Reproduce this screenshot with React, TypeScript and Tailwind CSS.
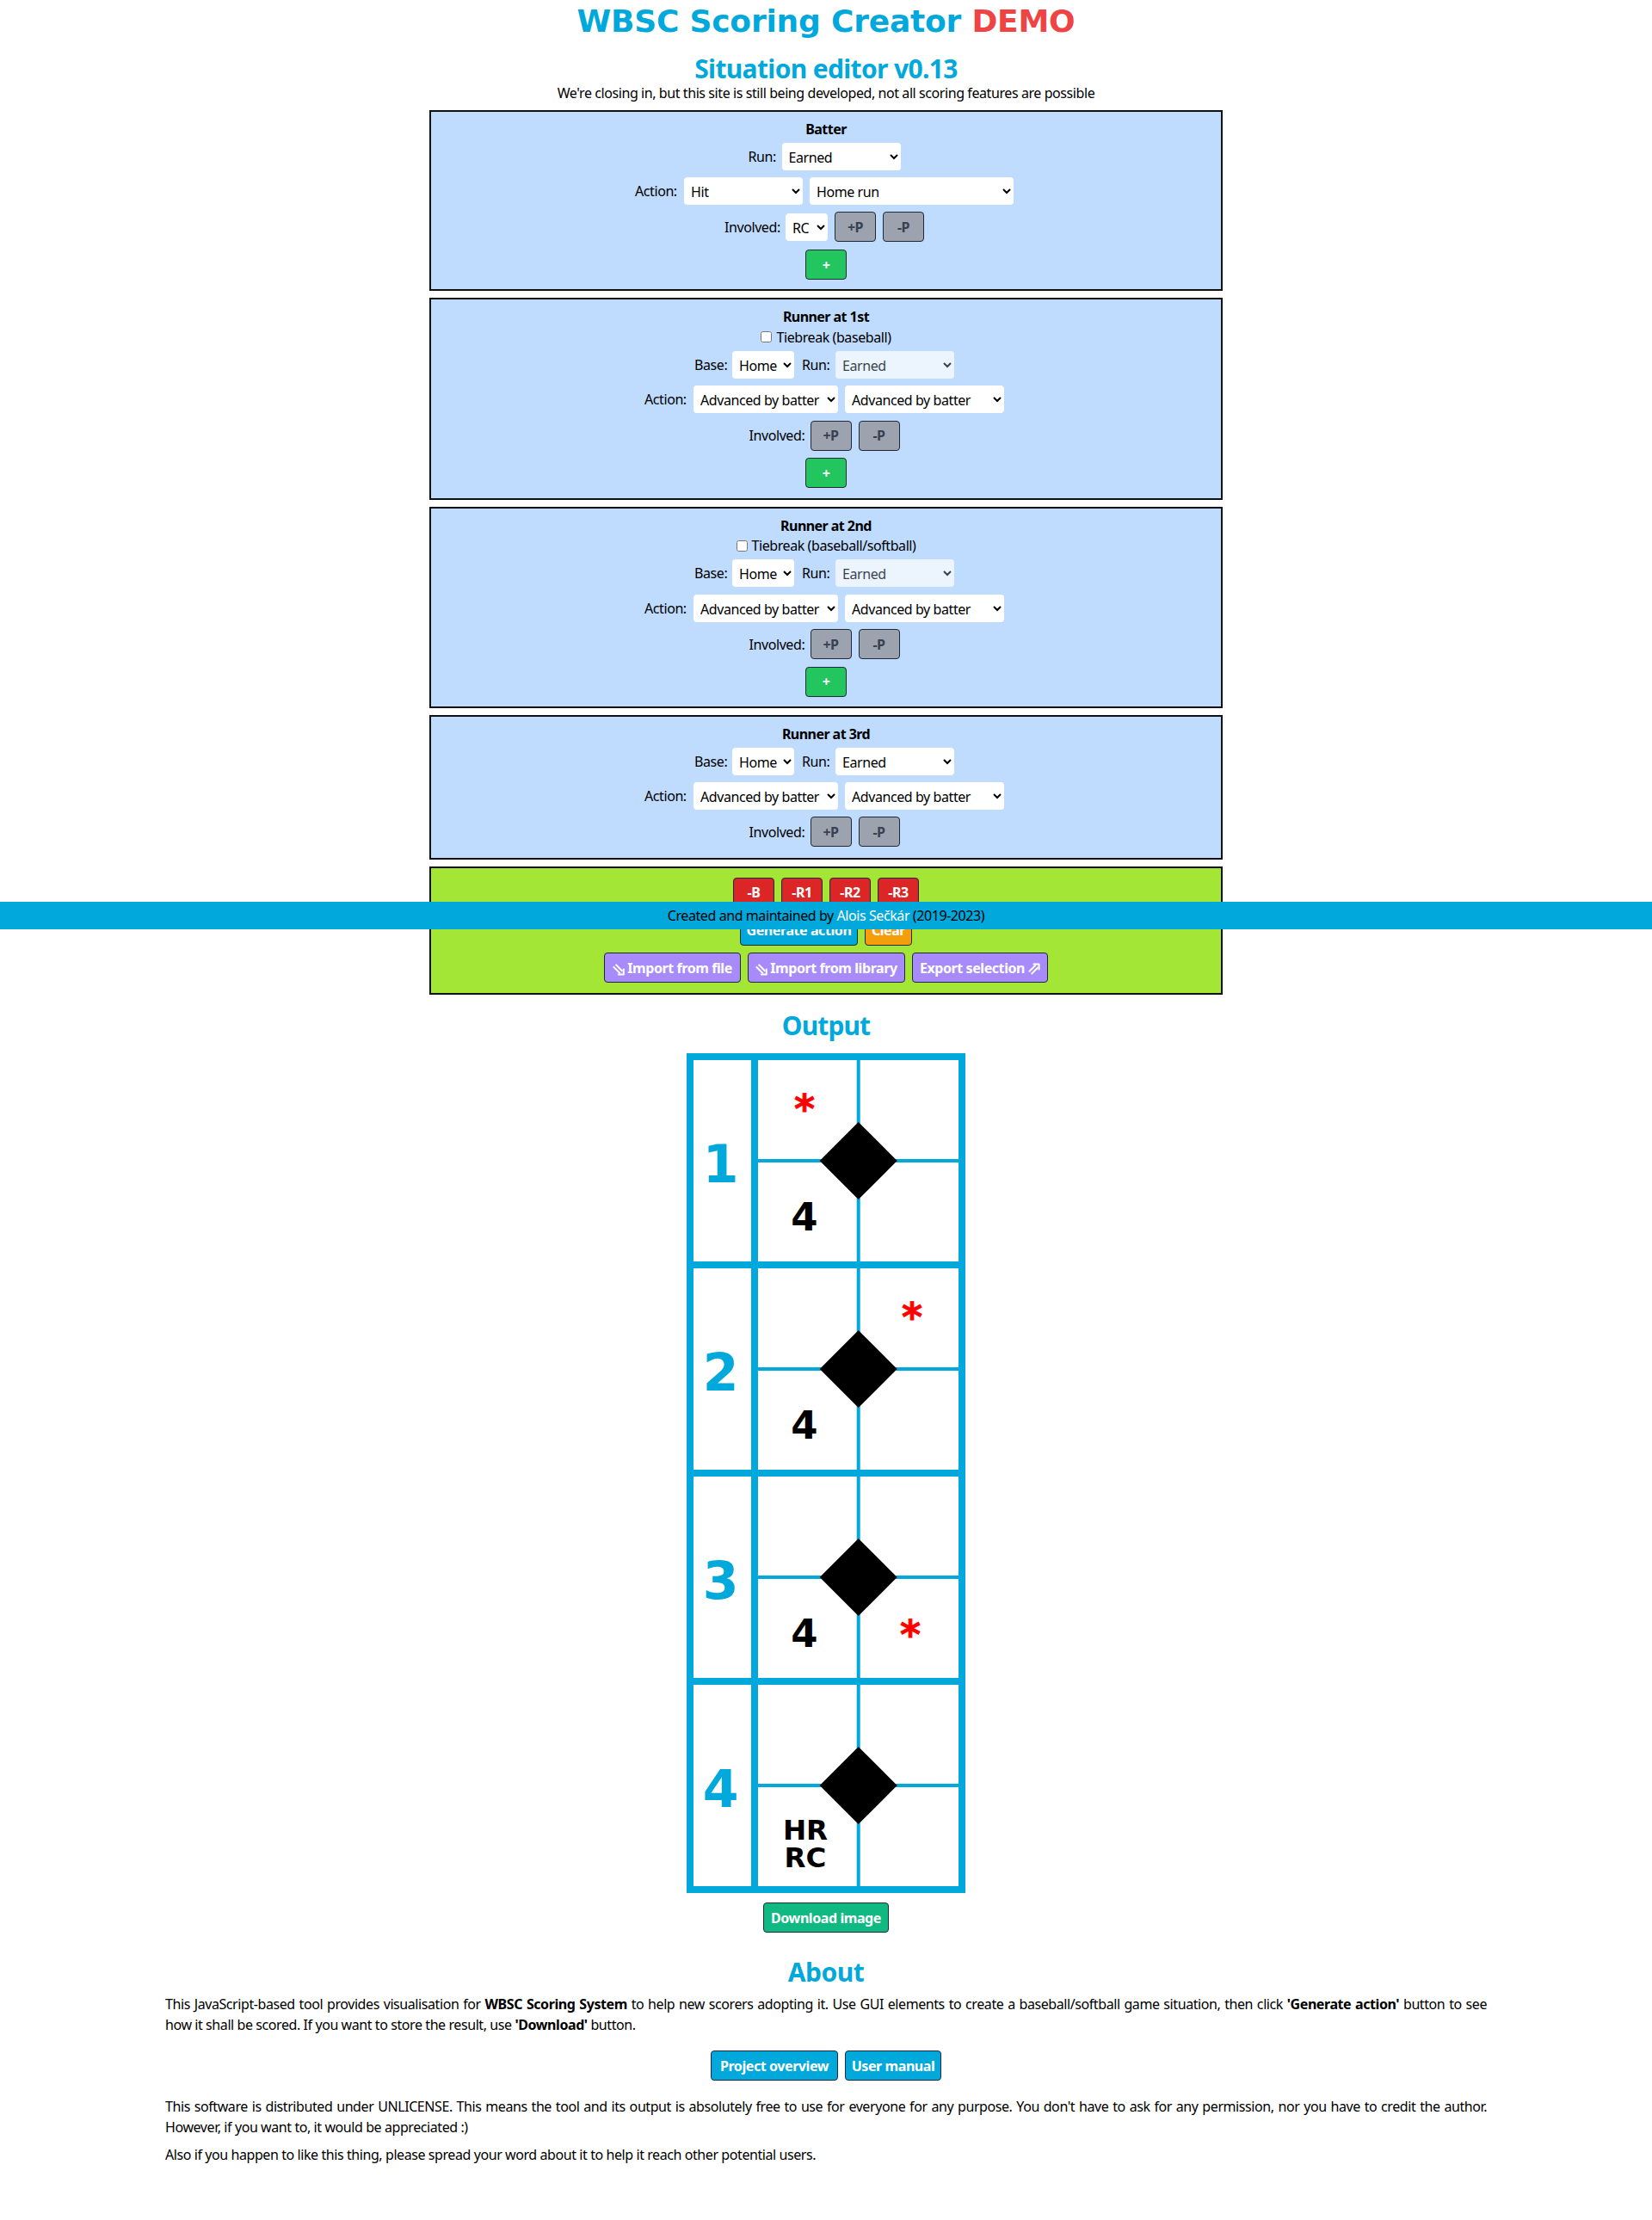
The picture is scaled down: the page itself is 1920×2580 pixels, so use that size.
import { ReactNode } from "react";

const BTN = "mx-1 flex h-[35px] shrink-0 items-center justify-center whitespace-nowrap rounded border border-[#1f2937] font-bold";

function Button({ className, children }: { className: string; children: ReactNode }) {
  return <button className={`${BTN} ${className}`}>{children}</button>;
}

function Select({ value, className, disabled }: { value: string; className: string; disabled?: boolean }) {
  return (
    <select
      disabled={disabled}
      className={`mx-1 h-8 shrink-0 rounded bg-white px-1 pt-[5px] pb-[3px] text-black disabled:opacity-70 ${className}`}
    >
      <option>{value}</option>
    </select>
  );
}

function Label({ className, children }: { className: string; children: ReactNode }) {
  return <span className={`mr-1 shrink-0 whitespace-nowrap ${className}`}>{children}</span>;
}

function Row({ tall, children }: { tall?: boolean; children: ReactNode }) {
  return (
    <div className={`flex items-center justify-center ${tall ? "h-[43.7px]" : "h-[40.3px]"}`}>{children}</div>
  );
}

function Panel({ title, className, children }: { title: string; className: string; children: ReactNode }) {
  return (
    <section className={`mx-auto mb-2 w-[922px] border-2 border-[#111] bg-[#bfdbfe] pt-2 ${className}`}>
      <h3 className="h-[23.4px] text-center leading-6 font-bold tracking-[-0.55px]">{title}</h3>
      {children}
    </section>
  );
}

function Involved({ rc }: { rc?: boolean }) {
  return (
    <Row tall>
      <Label className="w-[63px]">Involved:</Label>
      {rc && <Select value="RC" className="w-[49px]" />}
      <Button className="w-12 bg-[#9ca3af] text-[#374151]">+P</Button>
      <Button className="w-12 bg-[#9ca3af] text-[#374151]">-P</Button>
    </Row>
  );
}

function AddButton() {
  return (
    <Row tall>
      <Button className="w-12 bg-[#22c55e] text-white">+</Button>
    </Row>
  );
}

function Tiebreak({ label }: { label: string }) {
  return (
    <label className="flex h-[24.4px] items-center justify-center">
      <input type="checkbox" className="mr-[5px] h-[13px] w-[13px]" />
      <span className="whitespace-nowrap">{label}</span>
    </label>
  );
}

function RunnerRows({ runDisabled }: { runDisabled?: boolean }) {
  return (
    <>
      <Row>
        <Label className="w-[36px]">Base:</Label>
        <Select value="Home" className="w-[72px]" />
        <Label className="ml-[5px] w-[31px]">Run:</Label>
        <Select value="Earned" className="w-[138px]" disabled={runDisabled} />
      </Row>
      <Row>
        <Label className="w-[49px]">Action:</Label>
        <Select value="Advanced by batter" className="w-[168px]" />
        <Select value="Advanced by batter" className="w-[185px]" />
      </Row>
      <Involved />
    </>
  );
}

const BLUE = "#00a8db";

type Mark = { x: number; y: number };
const INNINGS: { no: number; star?: Mark }[] = [
  { no: 1, star: { x: 137, y: 81 } },
  { no: 2, star: { x: 262, y: 81 } },
  { no: 3, star: { x: 260, y: 208 } },
  { no: 4 },
];

function ScoreSheet() {
  return (
    <svg
      width="324"
      height="976"
      viewBox="0 0 324 976"
      className="mx-auto block tracking-normal"
      fontFamily="'DejaVu Sans', Verdana, sans-serif"
      fontWeight="bold"
    >
      <rect width="324" height="976" fill="#fff" />
      {INNINGS.map(({ no, star }, i) => (
        <g key={no} transform={`translate(0 ${i * 242})`}>
          <rect x="80" y="123" width="238" height="4" fill={BLUE} />
          <rect x="197.7" y="4" width="4" height="240" fill={BLUE} />
          <rect x="4" y="4" width="316" height="242" fill="none" stroke={BLUE} strokeWidth="8" />
          <rect x="75" y="4" width="8" height="242" fill={BLUE} />
          <polygon points="199.7,80 244.7,125 199.7,170 154.7,125" fill="#000" />
          <text x="39.5" y="150" fontSize="60" fill={BLUE} textAnchor="middle">{no}</text>
          {star && (
            <text x={star.x} y={star.y} fontSize="46" fill="#f00" stroke="#f00" strokeWidth="0.8" textAnchor="middle">*</text>
          )}
          {no < 4 ? (
            <text x="137" y="206" fontSize="45" textAnchor="middle">4</text>
          ) : (
            <>
              <text x="138" y="188" fontSize="32.5" textAnchor="middle">HR</text>
              <text x="138" y="220" fontSize="32.5" textAnchor="middle">RC</text>
            </>
          )}
        </g>
      ))}
    </svg>
  );
}

const ARROW = "inline-block h-[14px] w-[14px]";

function ArrowDown() {
  return (
    <svg viewBox="0 0 14 14" className={`${ARROW} mt-1 mr-[3px]`} fill="none" stroke="currentColor" strokeWidth="2">
      <path d="M0.8 3.4 8.8 11.4M3.6 0.9 11.4 8.7" />
      <path d="M6.8 12.4H12.8V6.6" strokeLinejoin="round" strokeLinecap="round" />
    </svg>
  );
}

function ArrowUp() {
  return (
    <svg viewBox="0 0 14 14" className={`${ARROW} mt-0.5 ml-1`} fill="none" stroke="currentColor" strokeWidth="2">
      <path d="M0.8 10.4 8.6 2.6M3.6 13.1 11.4 5.3" />
      <path d="M6.4 1.6H12.6V7.6" strokeLinejoin="round" strokeLinecap="round" />
    </svg>
  );
}

export default function App() {
  return (
    <main className="h-[2580px] w-[1920px] overflow-hidden bg-white font-['Noto_Sans','Segoe_UI',sans-serif] text-base tracking-[-0.42px] text-black">
      <h1 className="h-[61px] pt-[5px] text-center font-['DejaVu_Sans',Verdana,sans-serif] text-4xl leading-10 font-bold tracking-[-0.2px] text-[#00a8db]">
        WBSC Scoring Creator <span className="text-[#ef4444]">DEMO</span>
      </h1>
      <h2 className="h-[35px] pt-px text-center text-3xl leading-9 font-bold tracking-[-0.65px] text-[#00a8db]">
        Situation editor v0.13
      </h2>
      <p className="h-8 text-center leading-6">
        We're closing in, but this site is still being developed, not all scoring features are possible
      </p>

      <Panel title="Batter" className="h-[210px]">
        <Row>
          <Label className="w-[31px]">Run:</Label>
          <Select value="Earned" className="w-[138px]" />
        </Row>
        <Row>
          <Label className="w-[49px]">Action:</Label>
          <Select value="Hit" className="w-[138px]" />
          <Select value="Home run" className="w-[237px]" />
        </Row>
        <Involved rc />
        <AddButton />
      </Panel>
      <Panel title="Runner at 1st" className="h-[234.5px]">
        <Tiebreak label="Tiebreak (baseball)" />
        <RunnerRows runDisabled />
        <AddButton />
      </Panel>
      <Panel title="Runner at 2nd" className="h-[234.5px]">
        <Tiebreak label="Tiebreak (baseball/softball)" />
        <RunnerRows runDisabled />
        <AddButton />
      </Panel>
      <Panel title="Runner at 3rd" className="h-[167.5px]">
        <RunnerRows />
      </Panel>

      <section className="mx-auto h-[149.5px] w-[922px] border-2 border-[#111] bg-[#a3e635] pt-[7px] text-white">
        <Row tall>
          <Button className="w-12 bg-[#dc2626]">-B</Button>
          <Button className="w-12 bg-[#dc2626]">-R1</Button>
          <Button className="w-12 bg-[#dc2626]">-R2</Button>
          <Button className="w-12 bg-[#dc2626]">-R3</Button>
        </Row>
        <Row tall>
          <Button className="w-[137px] bg-[#00a8db]">Generate action</Button>
          <Button className="w-[55px] bg-[#f59e0b]">Clear</Button>
        </Row>
        <Row tall>
          <Button className="w-[159px] bg-[#a78bfa]"><ArrowDown />Import from file</Button>
          <Button className="w-[183px] bg-[#a78bfa]"><ArrowDown />Import from library</Button>
          <Button className="w-[158px] bg-[#a78bfa]">Export selection<ArrowUp /></Button>
        </Row>
      </section>

      <h2 className="h-[68px] pt-[18px] text-center text-3xl leading-9 font-bold tracking-[-0.9px] text-[#00a8db]">Output</h2>
      <ScoreSheet />
      <div className="flex justify-center pt-[11px]">
        <Button className="w-[146px] bg-[#10b981] text-white">Download image</Button>
      </div>

      <h2 className="h-[71px] pt-7 text-center text-3xl leading-9 font-bold tracking-[-0.5px] text-[#00a8db]">About</h2>
      <div className="mx-auto w-[1536px] text-justify">
        <p className="leading-6">
          This JavaScript-based tool provides visualisation for <b>WBSC Scoring System</b> to help new scorers adopting it.
          Use GUI elements to create a baseball/softball game situation, then click <b>'Generate action'</b> button to see
          how it shall be scored. If you want to store the result, use <b>'Download'</b> button.
        </p>
        <div className="flex justify-center pt-[18px] pb-[18px]">
          <Button className="w-[148px] bg-[#00a8db] text-white">Project overview</Button>
          <Button className="w-[112px] bg-[#00a8db] text-white">User manual</Button>
        </div>
        <p className="leading-6">
          This software is distributed under UNLICENSE. This means the tool and its output is absolutely free to use for
          everyone for any purpose. You don't have to ask for any permission, nor you have to credit the author. However,
          if you want to, it would be appreciated :)
        </p>
        <p className="pt-2 leading-6">
          Also if you happen to like this thing, please spread your word about it to help it reach other potential users.
        </p>
      </div>

      <footer className="absolute top-[1048px] left-0 h-8 w-[1920px] bg-[#00a8db] text-center leading-8">
        Created and maintained by <span className="text-white">Alois Sečkár</span> (2019-2023)
      </footer>
    </main>
  );
}
